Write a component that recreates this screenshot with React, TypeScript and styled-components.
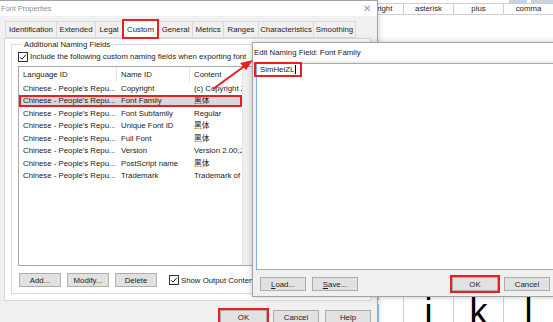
import React from 'react';
import styled, { createGlobalStyle } from 'styled-components';

const RED = '#ea1f1f';
const UI_FONT = `'Liberation Sans', 'Noto Sans CJK SC', sans-serif`;

const GlobalStyle = createGlobalStyle`
  html, body {
    margin: 0;
    padding: 0;
    background: #fff;
  }
  * {
    box-sizing: border-box;
  }
`;

const Desktop = styled.div`
  position: relative;
  width: 553px;
  height: 322px;
  overflow: hidden;
  background: #fff;
  font-family: ${UI_FONT};
  font-size: 7.8px;
  line-height: 9px;
  color: #1b1b1b;
`;

/* ---------- glyph grid of the main app, behind the dialogs ---------- */

const GlyphApp = styled.div`
  position: absolute;
  left: 350px;
  top: 0;
  width: 203px;
  height: 322px;
  display: flex;
  flex-direction: column;
  background: #fff;
  overflow: hidden;
`;

const AppToolbar = styled.div`
  height: 14px;
  display: flex;
  justify-content: flex-end;
  align-items: flex-start;
  gap: 4px;
`;

const ToolbarStub = styled.div<{ $w: number }>`
  width: ${(p) => p.$w}px;
  height: 3px;
  background: #c9d3de;
`;

const GlyphRow = styled.div<{ $h: number }>`
  display: grid;
  grid-template-columns: 54px 50px 50px 50px;
  height: ${(p) => p.$h}px;
  flex: none;
  border-top: 1px solid #cfcfcf;
`;

const NameCell = styled.div`
  border-right: 1px solid #cfcfcf;
  text-align: center;
  line-height: 10px;
  white-space: nowrap;
  color: #222;
`;

const GlyphCell = styled.div`
  border-right: 1px solid #cfcfcf;
  text-align: center;
  font-family: 'Liberation Sans', sans-serif;
  font-size: 36px;
  line-height: 36px;
  padding-top: 9px;
  color: #000;
`;

/* ---------- generic window chrome ---------- */

const Window = styled.div<{ $left: number; $top: number; $w: number; $h: number; $z: number }>`
  position: absolute;
  left: ${(p) => p.$left}px;
  top: ${(p) => p.$top}px;
  width: ${(p) => p.$w}px;
  height: ${(p) => p.$h}px;
  z-index: ${(p) => p.$z};
  background: #f0f0f0;
  border: 1px solid #a3a3a3;
  box-shadow: 0 0 6px rgba(0, 0, 0, 0.22);
  display: flex;
  flex-direction: column;
`;

const TitleBar = styled.div<{ $h: number; $muted?: boolean }>`
  height: ${(p) => p.$h}px;
  flex: none;
  background: #fff;
  display: flex;
  align-items: center;
  justify-content: space-between;
  padding: 0 6px 0 1px;
  color: ${(p) => (p.$muted ? '#8f8f8f' : '#1b1b1b')};
  font-size: ${(p) => (p.$muted ? '7.4px' : '7.8px')};
`;

const CloseGlyph = styled.span`
  color: #9a9a9a;
  font-size: 10px;
  line-height: 10px;
`;

const Button = styled.div<{ $w: number; $marked?: boolean }>`
  width: ${(p) => p.$w}px;
  height: 14px;
  flex: none;
  background: #e1e1e1;
  border: 1px solid #adadad;
  display: flex;
  align-items: center;
  justify-content: center;
  outline: ${(p) => (p.$marked ? `2px solid ${RED}` : 'none')};
  outline-offset: 0;
  white-space: nowrap;
`;

const Underlined = styled.span`
  text-decoration: underline;
`;

/* ---------- Font Properties ---------- */

const PropsBody = styled.div`
  flex: 1;
  display: flex;
  flex-direction: column;
  padding: 2px 6px 0 4px;
`;

const TabStrip = styled.div`
  height: 20px;
  display: flex;
  align-items: flex-end;
  padding-left: 2px;
`;

const Tab = styled.div<{ $w: number; $active?: boolean; $marked?: boolean }>`
  width: ${(p) => p.$w}px;
  height: ${(p) => (p.$active ? 20 : 17)}px;
  margin-left: -1px;
  margin-bottom: ${(p) => (p.$active ? -1 : 0)}px;
  position: relative;
  z-index: ${(p) => (p.$active ? 2 : 0)};
  background: ${(p) => (p.$active ? '#fff' : '#f0f0f0')};
  border: 1px solid #d9d9d9;
  border-bottom: ${(p) => (p.$active ? 'none' : '1px solid #d9d9d9')};
  outline: ${(p) => (p.$marked ? `2px solid ${RED}` : 'none')};
  outline-offset: -2px;
  display: flex;
  align-items: center;
  justify-content: center;
  white-space: nowrap;
`;

const TabPanel = styled.div`
  height: 263px;
  background: #fff;
  border: 1px solid #d9d9d9;
  padding: 0 6px 6px 6px;
  display: flex;
  flex-direction: column;
`;

const GroupBox = styled.fieldset`
  flex: 1;
  margin: 0;
  min-width: 0;
  border: 1px solid #dcdcdc;
  padding: 1px 6px 6px 6px;
  display: flex;
  flex-direction: column;
`;

const GroupLegend = styled.legend`
  margin-left: 4px;
  padding: 0 2px;
  line-height: 11px;
`;

const CheckRow = styled.label`
  display: flex;
  align-items: center;
  gap: 2px;
  height: 11px;
  white-space: nowrap;
`;

const ListView = styled.div`
  margin-top: 4px;
  width: 242px;
  height: 200px;
  border: 1px solid #a8a8a8;
  display: flex;
  overflow: hidden;
`;

const ListContent = styled.div`
  flex: 1;
  min-width: 0;
  overflow: hidden;
`;

const ListScroll = styled.div`
  width: 17px;
  flex: none;
  background: #f0f0f0;
  border-left: 1px solid #e6e6e6;
`;

const ListRow = styled.div<{ $header?: boolean; $selected?: boolean }>`
  display: grid;
  grid-template-columns: 98px 73px 150px;
  height: ${(p) => (p.$header ? 15 : 12.5)}px;
  align-items: center;
  white-space: nowrap;
  background: ${(p) => (p.$selected ? '#d9d9d9' : 'transparent')};
  outline: ${(p) => (p.$selected ? `2px solid ${RED}` : 'none')};
  outline-offset: -2px;
`;

const ListCell = styled.div<{ $header?: boolean }>`
  height: 100%;
  display: flex;
  align-items: center;
  padding-left: 4px;
  overflow: hidden;
  border-right: ${(p) => (p.$header ? '1px solid #e5e5e5' : 'none')};
`;

const GroupButtons = styled.div`
  margin-top: 7px;
  display: flex;
  align-items: center;
  gap: 6px;
  padding-left: 1px;
`;

const InlineCheck = styled(CheckRow)`
  margin-left: 6px;
`;

const DialogButtons = styled.div`
  margin-top: 9px;
  display: flex;
  justify-content: flex-end;
  gap: 6px;
`;

/* ---------- Edit Naming Field ---------- */

const EditBody = styled.div`
  flex: 1;
  display: flex;
  flex-direction: column;
  padding: 2px 0 0 3px;
`;

const TextBox = styled.div`
  height: 207px;
  background: #fff;
  border: 1px solid #7eb0df;
  margin-right: 3px;
`;

const Typed = styled.div`
  display: inline-flex;
  align-items: center;
  width: 48px;
  height: 15px;
  margin: -2px 0 0 -3px;
  padding-left: 4px;
  border: 2px solid ${RED};
  white-space: nowrap;
`;

const Caret = styled.span`
  display: inline-block;
  width: 1px;
  height: 9px;
  margin-left: 1px;
  background: #000;
`;

const EditButtons = styled.div`
  margin-top: 7px;
  display: flex;
  gap: 6px;
  padding: 0 7px 0 4px;
`;

const Spacer = styled.div`
  flex: 1;
`;

const Overlay = styled.svg`
  position: absolute;
  left: 0;
  top: 0;
  z-index: 10;
  pointer-events: none;
`;

function CheckBox() {
  return (
    <svg width="10" height="10" viewBox="0 0 10 10">
      <rect x="0.5" y="0.5" width="9" height="9" fill="#fff" stroke="#333" />
      <path d="M2 5.2 L4 7.2 L8 2.6" fill="none" stroke="#222" strokeWidth="1" />
    </svg>
  );
}

const tabs = [
  { label: 'Identification', w: 52 },
  { label: 'Extended', w: 40 },
  { label: 'Legal', w: 28 },
  { label: 'Custom', w: 37, active: true },
  { label: 'General', w: 35 },
  { label: 'Metrics', w: 32 },
  { label: 'Ranges', w: 36 },
  { label: 'Characteristics', w: 56 },
  { label: 'Smoothing', w: 43 },
];

const LANG = "Chinese - People's Repu...";

const rows = [
  { name: 'Copyright', content: '(c) Copyright ZH' },
  { name: 'Font Family', content: '黑体', selected: true },
  { name: 'Font Subfamily', content: 'Regular' },
  { name: 'Unique Font ID', content: '黑体' },
  { name: 'Full Font', content: '黑体' },
  { name: 'Version', content: 'Version 2.00;June' },
  { name: 'PostScript name', content: '黑体' },
  { name: 'Trademark', content: 'Trademark of ZH' },
];

function GlyphBackdrop() {
  return (
    <GlyphApp>
      <AppToolbar>
        <ToolbarStub $w={18} />
        <ToolbarStub $w={22} />
      </AppToolbar>
      <GlyphRow $h={11}>
        {['copyright', 'asterisk', 'plus', 'comma'].map((n) => (
          <NameCell key={n}>{n}</NameCell>
        ))}
      </GlyphRow>
      <GlyphRow $h={270} />
      <GlyphRow $h={40}>
        {['i', 'j', 'k', 'l'].map((g) => (
          <GlyphCell key={g}>{g}</GlyphCell>
        ))}
      </GlyphRow>
    </GlyphApp>
  );
}

function FontProperties() {
  return (
    <Window $left={-1} $top={0} $w={379} $h={332} $z={2}>
      <TitleBar $h={15} $muted>
        <span>Font Properties</span>
        <CloseGlyph>✕</CloseGlyph>
      </TitleBar>
      <PropsBody>
        <TabStrip>
          {tabs.map((t) => (
            <Tab key={t.label} $w={t.w} $active={t.active} $marked={t.active}>
              {t.label}
            </Tab>
          ))}
        </TabStrip>
        <TabPanel>
          <GroupBox>
            <GroupLegend>Additional Naming Fields</GroupLegend>
            <CheckRow>
              <CheckBox />
              Include the following custom naming fields when exporting font
            </CheckRow>
            <ListView>
              <ListContent>
                <ListRow $header>
                  <ListCell $header>Language ID</ListCell>
                  <ListCell $header>Name ID</ListCell>
                  <ListCell $header>Content</ListCell>
                </ListRow>
                {rows.map((r) => (
                  <ListRow key={r.name} $selected={r.selected}>
                    <ListCell>{LANG}</ListCell>
                    <ListCell>{r.name}</ListCell>
                    <ListCell>{r.content}</ListCell>
                  </ListRow>
                ))}
              </ListContent>
              <ListScroll />
            </ListView>
            <GroupButtons>
              <Button $w={42}>Add...</Button>
              <Button $w={42}>Modify...</Button>
              <Button $w={42}>Delete</Button>
              <InlineCheck>
                <CheckBox />
                Show Output Content
              </InlineCheck>
            </GroupButtons>
          </GroupBox>
        </TabPanel>
        <DialogButtons>
          <Button $w={47} $marked>
            OK
          </Button>
          <Button $w={46}>Cancel</Button>
          <Button $w={46}>Help</Button>
        </DialogButtons>
      </PropsBody>
    </Window>
  );
}

function EditNamingField() {
  return (
    <Window $left={252} $top={42} $w={306} $h={255} $z={3}>
      <TitleBar $h={18}>
        <span>Edit Naming Field: Font Family</span>
      </TitleBar>
      <EditBody>
        <TextBox>
          <Typed>
            SimHeiZL
            <Caret />
          </Typed>
        </TextBox>
        <EditButtons>
          <Button $w={46}>
            <Underlined>L</Underlined>oad...
          </Button>
          <Button $w={46}>
            <Underlined>S</Underlined>ave...
          </Button>
          <Spacer />
          <Button $w={46} $marked>
            OK
          </Button>
          <Button $w={46}>Cancel</Button>
        </EditButtons>
      </EditBody>
    </Window>
  );
}

function Arrow() {
  return (
    <Overlay width="553" height="322" viewBox="0 0 553 322">
      <line x1="213" y1="89" x2="246" y2="65" stroke={RED} strokeWidth="2" />
      <polygon points="253,60 240,63 246,70" fill={RED} />
    </Overlay>
  );
}

export default function App() {
  return (
    <>
      <GlobalStyle />
      <Desktop>
        <GlyphBackdrop />
        <FontProperties />
        <EditNamingField />
        <Arrow />
      </Desktop>
    </>
  );
}
